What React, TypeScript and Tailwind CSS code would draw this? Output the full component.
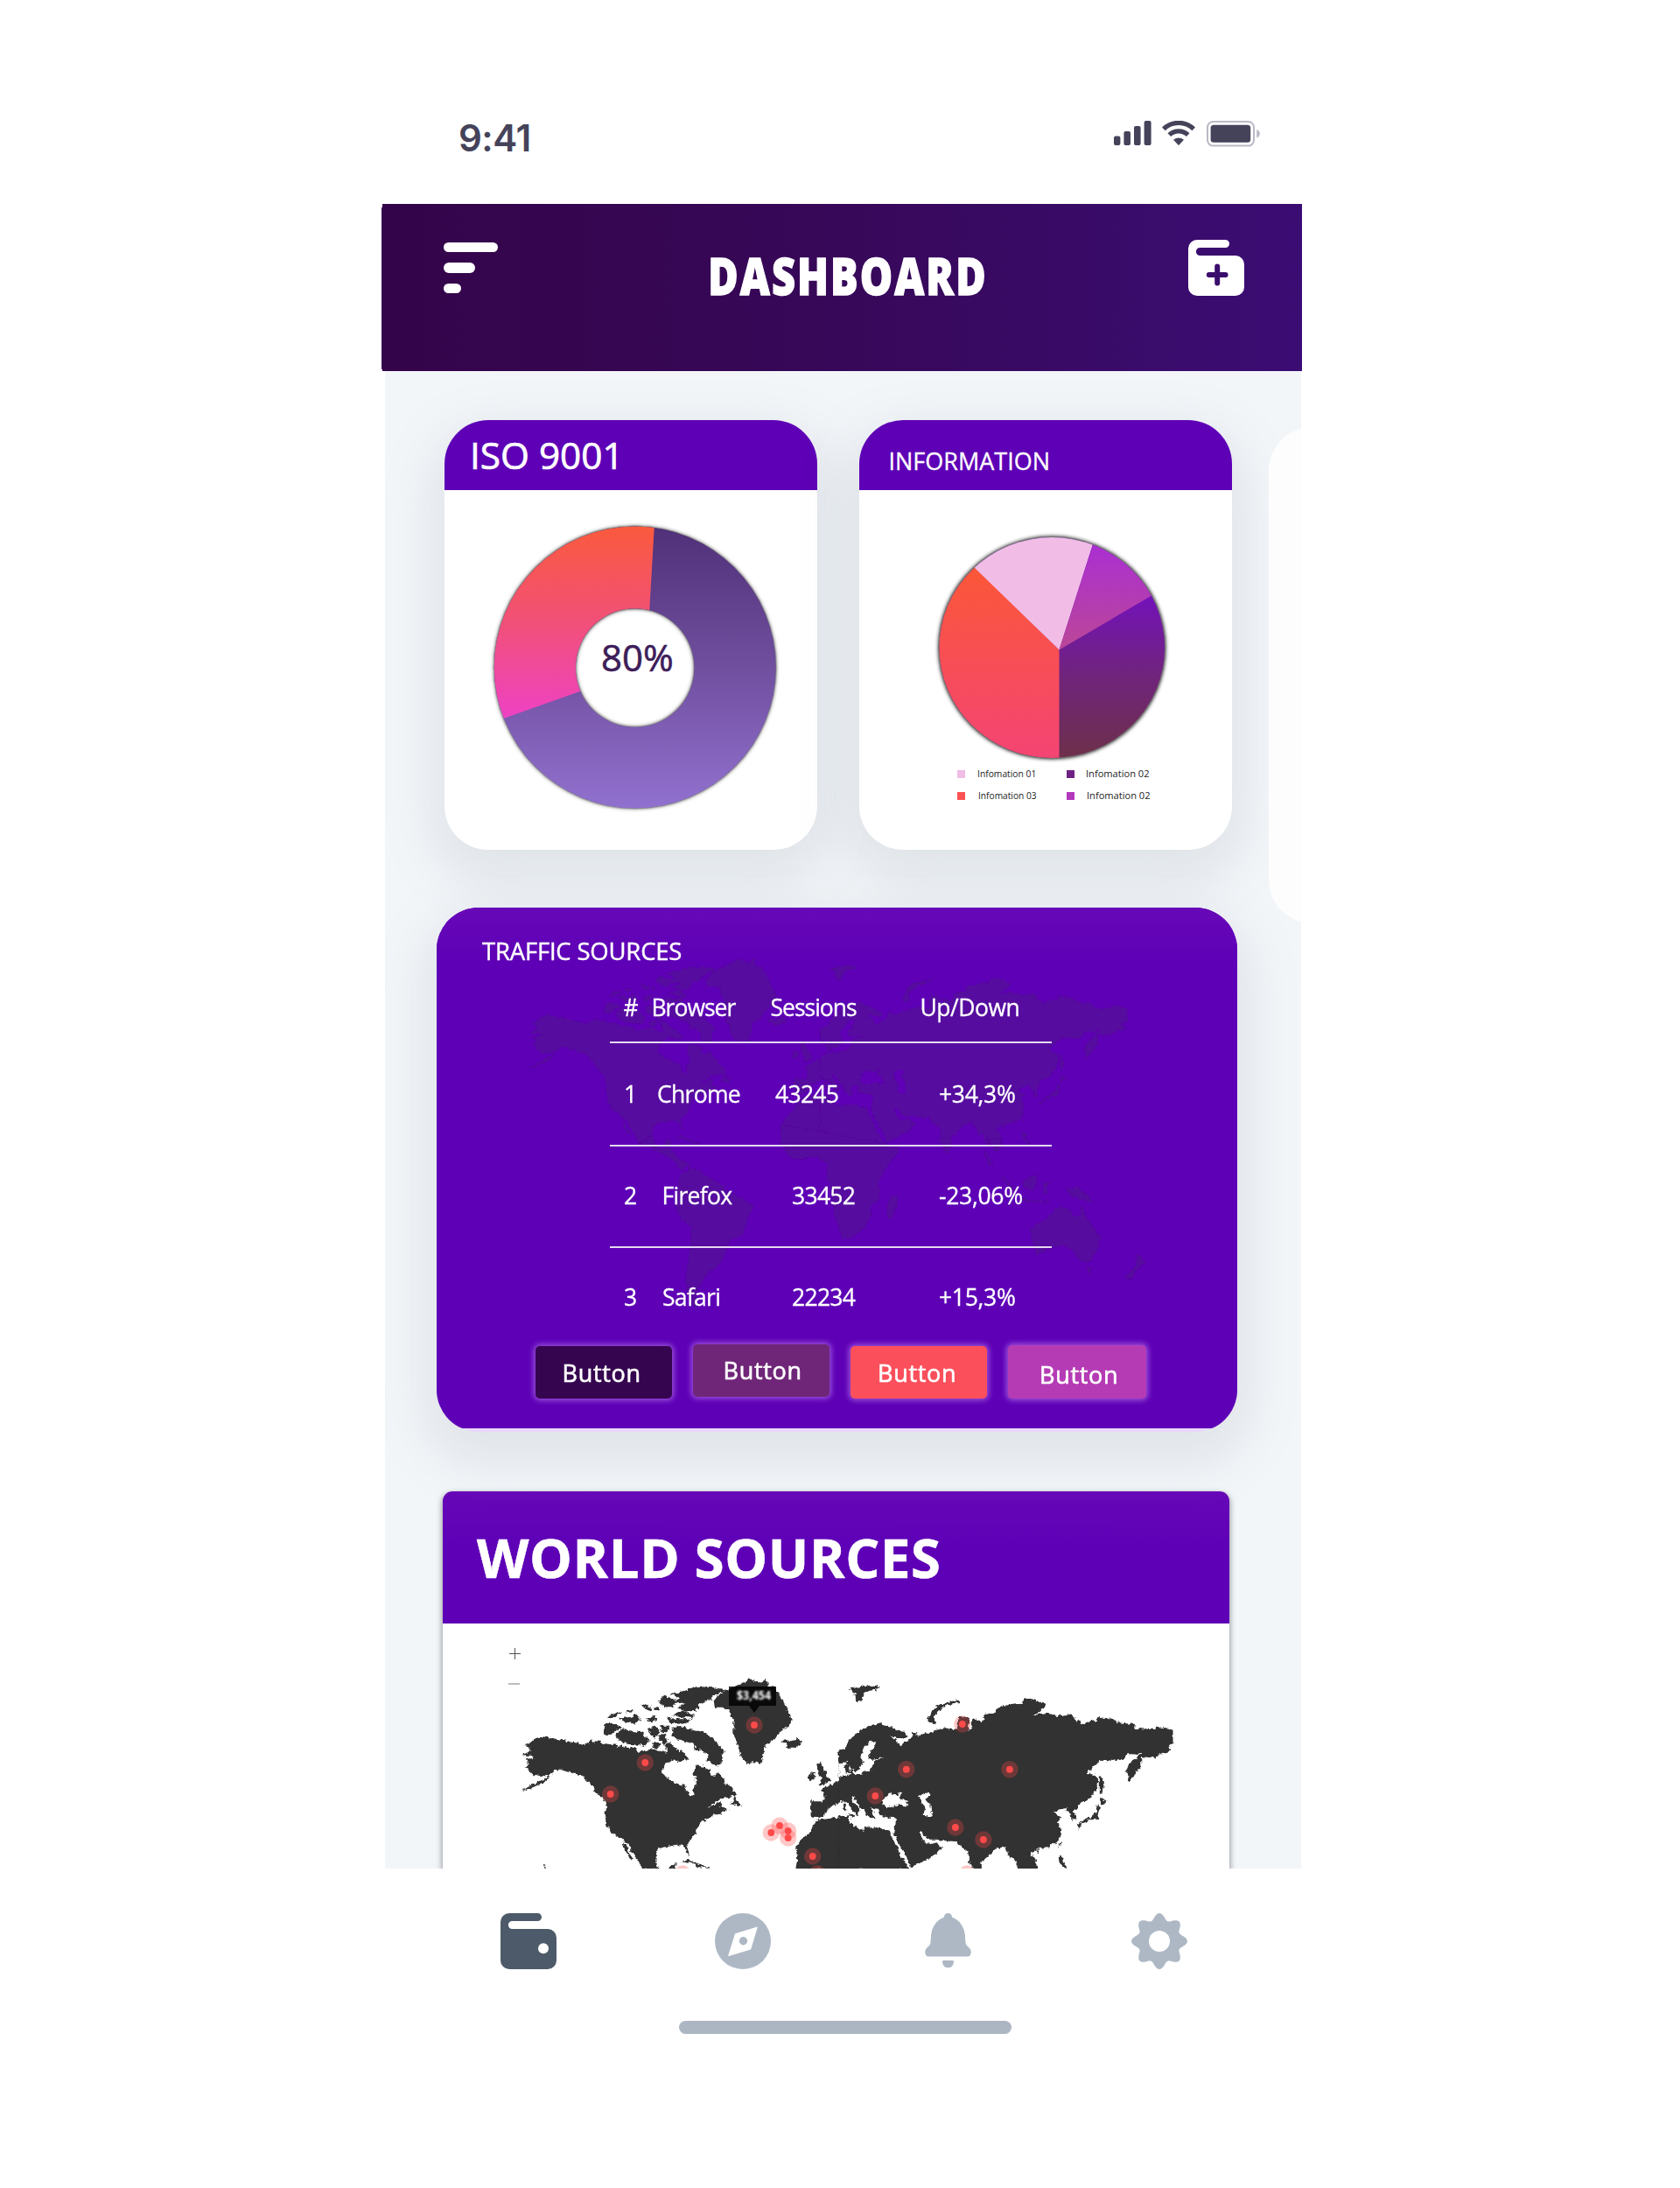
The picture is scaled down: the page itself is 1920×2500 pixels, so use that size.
import React from "react";

const SANS = "font-['Open_Sans','Noto_Sans',sans-serif]";

/* ---------- icons ---------- */

function SignalIcon() {
  return (
    <svg width="43" height="28" viewBox="0 0 43 28" fill="#45435a">
      <rect x="0" y="17.5" width="7.4" height="10.5" rx="2" />
      <rect x="11.4" y="12" width="7.6" height="16" rx="2" />
      <rect x="23" y="6" width="7.6" height="22" rx="2" />
      <rect x="34.6" y="0" width="8" height="28" rx="2" />
    </svg>
  );
}

function WifiIcon() {
  return (
    <svg width="38" height="28" viewBox="0 0 38 28" fill="none" stroke="#45435a" strokeWidth="5.2">
      <path d="M1.8 9.4A24.5 24.5 0 0 1 36.2 9.4" />
      <path d="M8.3 16.2A15.4 15.4 0 0 1 29.7 16.2" />
      <path d="M13 21.8Q19 17.4 25 21.8L19.6 27.6Q19 28.2 18.4 27.6Z" fill="#45435a" stroke="none" />
    </svg>
  );
}

function BatteryIcon() {
  return (
    <svg width="62" height="30" viewBox="0 0 62 30">
      <rect x="1" y="1" width="53" height="27.6" rx="6.5" fill="none" stroke="#bbb9c6" strokeWidth="2" />
      <rect x="4.6" y="4.8" width="45.6" height="20" rx="3.5" fill="#45435a" />
      <path d="M57.2 10Q60.8 11.5 60.8 14.8T57.2 19.6Z" fill="#bbb9c6" />
    </svg>
  );
}

const WALLET =
  "M10 0H42.5A4.5 4.5 0 0 1 42.5 9H13.4A4.5 4.5 0 0 0 13.4 18H54A10 10 0 0 1 64 28V54A10 10 0 0 1 54 64H10A10 10 0 0 1 0 54V10A10 10 0 0 1 10 0Z";

function AddWalletIcon() {
  return (
    <svg width="64" height="64" viewBox="0 0 64 64">
      <path d={WALLET} fill="#fff" />
      <path d="M33.2 30.6V49.4M23.8 40H42.6" stroke="#3a0d6c" strokeWidth="6" strokeLinecap="round" />
    </svg>
  );
}

function WalletIcon() {
  return (
    <svg width="64" height="64" viewBox="0 0 64 64">
      <path d={WALLET} fill="#4d5a69" />
      <circle cx="49" cy="40.3" r="6" fill="#fff" />
    </svg>
  );
}

function CompassIcon() {
  return (
    <svg width="64" height="64" viewBox="0 0 64 64">
      <circle cx="32" cy="32" r="32" fill="#aeb8c5" />
      <path
        d="M48 16.3L40.6 40.8L15.9 48.4L23.6 24Z"
        fill="#fff"
        stroke="#fff"
        strokeWidth="1.4"
        strokeLinejoin="round"
      />
      <circle cx="32.5" cy="31.8" r="4.7" fill="#aeb8c5" />
    </svg>
  );
}

function BellIcon() {
  return (
    <svg width="53" height="63" viewBox="0 0 53 63" fill="#aeb8c5">
      <path d="M26.5 0C29 0 31 1.8 31.3 4.8C40 8 45.4 16.5 46 26C46.2 30 46.3 33 47 35.5C48 37.5 50.5 38.8 51.8 41C53.3 44 52.8 46.5 51.5 48.3Q50.8 49.5 49.5 49.5H3.5Q2.2 49.5 1.5 48.3C.2 46.5 -.3 44 1.2 41C2.5 38.8 5 37.5 6 35.5C6.7 33 6.8 30 7 26C7.6 16.5 13 8 21.7 4.8C22 1.8 24 0 26.5 0Z" />
      <path d="M21 54H32Q33 54 33 55.8A6.5 6.5 0 0 1 20 55.8Q20 54 21 54Z" />
    </svg>
  );
}

const GEAR =
  "M" +
  Array.from({ length: 144 }, (_, i) => {
    const t = (i * Math.PI) / 72;
    const r = 28.2 + 3.7 * Math.cos(8 * t);
    return `${(32 + r * Math.sin(t)).toFixed(2)} ${(32 - r * Math.cos(t)).toFixed(2)}`;
  }).join("L") +
  "Z";

function GearIcon() {
  return (
    <svg width="64" height="64" viewBox="0 0 64 64">
      <path d={GEAR} fill="#aeb8c5" />
      <circle cx="32" cy="32" r="12" fill="#fff" />
    </svg>
  );
}

/* ---------- world map ---------- */

const WEST_LAND = [
  "M330 942L352 930L365 918L392 912L402 916L440 921L470 926L500 934L530 942L556 930L568 928L590 930L615 938L650 942L680 950L712 955L715 965L745 962L768 955L790 962L815 968L838 970L850 985L832 995L812 1006L801 1030L803 1045L830 1062L855 1075L883 1082L885 1100L900 1118L907 1112L906 1090L918 1075L916 1055L908 1040L914 1012L940 1015L962 1025L966 1045L978 1050L992 1035L1008 1055L1025 1080L1050 1098L1056 1115L1030 1122L1000 1126L975 1140L958 1155L985 1142L1005 1135L1000 1155L1020 1162L1028 1158L1000 1178L985 1180L960 1195L935 1205L920 1225L918 1245L905 1258L888 1275L886 1290L896 1310L893 1320L884 1308L875 1288L850 1283L820 1290L795 1292L782 1305L778 1335L788 1370L735 1370L700 1310L680 1278L665 1270L650 1255L628 1245L610 1215L604 1180L607 1145L598 1125L575 1105L560 1080L540 1060L520 1045L480 1035L450 1025L432 1030L415 1045L400 1048L360 1045L345 1030L332 1015L345 1005L332 992L362 985L352 978L320 975L335 965L355 962L345 955Z",
  "M665 1272L678 1290L702 1336L690 1328L670 1298Z",
  "M315 1100L345 1083L380 1066L415 1046L412 1056L385 1074L350 1090Z",
  "M1036 1144L1050 1118L1062 1135L1075 1152L1060 1150Z",
  "M640 905L660 888L690 892L730 898L757 925L740 945L710 940L680 938L650 925Z",
  "M597 905L605 870L640 870L664 882L640 892L625 906Z",
  "M612 848L632 832L660 826L652 838L625 850Z",
  "M650 850L672 844L690 850L710 834L728 858L700 868L672 862Z",
  "M678 822L700 820L700 829L680 830Z",
  "M730 800L750 808L770 816L762 826L742 818Z",
  "M775 810L794 816L790 825L776 820Z",
  "M748 848L775 842L782 852L765 865L750 860Z",
  "M750 885L775 878L792 895L782 915L760 907Z",
  "M790 878L822 874L826 888L802 902Z",
  "M786 908L812 903L818 932L800 936Z",
  "M765 932L794 933L788 957L770 948Z",
  "M833 882L862 876L888 883L892 915L860 924L836 912Z",
  "M825 766L880 755L920 743L980 745L1020 752L985 768L960 790L930 800L915 824L880 827L850 812L880 803L840 795L862 780Z",
  "M788 792L808 773L850 790L838 816L808 810Z",
  "M835 838L870 824L912 842L905 850L860 842Z",
  "M815 848L860 853L897 852L890 868L830 870Z",
  "M860 905L890 886L930 898L965 908L987 935L1018 965L1002 975L1005 1000L990 1014L955 997L960 975L930 957L905 937L870 927Z",
  "M805 938L830 933L850 958L870 963L892 990L860 1000L840 986L820 966Z",
  "M912 948L930 948L930 960L914 960Z",
  "M978 790L1000 765L1040 745L1075 730L1100 713L1130 728L1160 716L1165 740L1190 745L1220 800L1245 850L1235 875L1200 900L1185 925L1155 940L1145 985L1142 1008L1115 1000L1090 1002L1070 980L1060 945L1045 900L1045 860L1030 820L1005 812L980 812Z",
  "M1208 928L1222 922L1240 928L1265 917L1280 935L1255 950L1235 950L1222 938Z",
  "M1330 1008L1345 1002L1352 1020L1365 1045L1378 1065L1355 1077L1333 1078L1348 1060L1335 1040Z",
  "M1302 1048L1318 1034L1328 1045L1320 1062L1302 1065Z",
  "M1440 942L1420 955L1402 970L1405 1000L1425 1005L1440 995Z",
  "M1420 1015L1440 1008V1040L1428 1035Z",
  "M1440 1042L1420 1055L1395 1068L1375 1080L1340 1095L1355 1102L1358 1125L1350 1135L1308 1135L1310 1185L1335 1190L1355 1185L1368 1160L1385 1150L1410 1138L1440 1130Z",
  "M1422 1142L1430 1142L1432 1168L1423 1166Z",
  "M1440 1186L1400 1190L1370 1195L1335 1198L1320 1215L1305 1245L1280 1265L1262 1290L1258 1310L1262 1340L1258 1370H1440Z",
  "M865 1342L885 1335L920 1346L968 1366L930 1360L900 1347Z",
  "M820 1370L830 1350L848 1348L846 1370Z",
  "M392 1352L402 1356L400 1364Z",
].join("");

const EAST_LAND = [
  "M-4 962L20 945L40 915L70 890L105 872L140 868L165 878L215 900L222 915L205 922L180 915L168 908L185 925L200 945L215 930L240 920L238 900L250 898L256 912L285 900L345 883L375 888L392 885L385 870L395 843L425 845L430 860L425 895L435 885L440 850L470 865L478 838L515 828L530 810L575 800L605 797L612 782L635 783L680 800L682 808L660 828L640 840L680 832L735 842L770 835L780 855L800 868L850 858L855 846L905 852L920 865L975 870L985 885L1040 888L1050 878L1100 886L1105 892V935L1090 940L1100 960L1070 970L1045 983L1010 983L998 980L1000 1000L995 1020L975 1045L960 1068L950 1035L955 1010L985 985L1008 962L985 974L955 972L940 992L905 995L865 992L845 1010L820 1038L850 1045L858 1065L850 1095L825 1130L795 1140L785 1165L775 1165L783 1195L768 1200L765 1175L750 1165L755 1158L735 1160L712 1170L722 1185L738 1190L722 1205L735 1230L733 1250L720 1275L690 1290L655 1298L635 1310L650 1335L655 1370H595L580 1330L565 1330L555 1305L542 1292L515 1298L495 1320L470 1340L470 1370L442 1370L430 1340L425 1305L408 1295L385 1272L350 1270L320 1265L290 1265L268 1235L265 1245L275 1265L290 1280L315 1275L340 1292L320 1315L290 1335L235 1360L225 1332L205 1298L187 1262L178 1240L188 1192L165 1190L135 1185L128 1160L105 1158L110 1175L118 1190L100 1192L85 1180L78 1160L60 1145L45 1120L38 1125L50 1145L68 1162L55 1180L35 1158L20 1138L-4 1130Z",
  "M-4 1186L22 1190L30 1210L75 1232L90 1222L130 1227L165 1238L185 1285L210 1335L232 1370H-4Z",
  "M22 1178L50 1182L46 1192L28 1186Z",
  "M290 855L300 840L310 815L335 800L395 786L398 795L350 808L325 825L312 845L320 868L300 864Z",
  "M28 748L55 745L80 738L130 742L120 752L88 757L78 775L65 792L45 772L55 765Z",
  "M862 1048L868 1050L876 1085L868 1108L862 1110Z",
  "M860 1118L872 1128L886 1133L866 1148Z",
  "M853 1146L862 1165L856 1195L835 1198L800 1212L795 1205L830 1190L850 1170Z",
  "M786 1212L802 1215L792 1229Z",
  "M724 1284L735 1272L732 1290Z",
  "M725 1322L737 1320L740 1345L758 1366L745 1362L728 1345Z",
  "M648 1302L666 1299L658 1316Z",
].join("");

const EAST_SEA = [
  "M105 925L119 934L112 950L96 968L98 990L148 985L112 996L108 1018L92 1034L50 1044L38 1030L60 1028L78 1000L68 985L75 960Z",
  "M-4 1008L22 996L36 1026L38 1040L0 1052L-4 1052Z",
  "M140 1142L148 1118L165 1105L180 1114L208 1102L196 1120L222 1136L224 1150L185 1148L155 1156Z",
  "M260 1118L280 1106L298 1106L296 1120L285 1128L300 1145L304 1182L290 1189L275 1180L280 1155Z",
].join("");

const DENMARK = "M14 1012L28 1004L30 1022L38 1034L20 1040Z";

const SOUTH_LAND = [
  "M731 1306L755 1318L768 1325L777 1335L785 1339L790 1331L775 1322L765 1310L753 1312L745 1297Z",
  "M783 1333L797 1336L815 1348L823 1352L832 1361L850 1370L862 1378L855 1392L850 1410L835 1418L827 1437L817 1450L807 1457L797 1475L796 1497L787 1484L783 1463L788 1430L790 1403L778 1393L771 1377L776 1347Z",
  "M892 1285L893 1308L898 1317L907 1325L920 1323L933 1322L945 1330L944 1342L950 1360L953 1387L962 1415L974 1415L989 1402L996 1388L995 1380L1006 1368L1004 1350L1013 1334L1027 1317L1028 1311L1012 1306Z",
  "M1025 1364L1016 1370L1013 1382L1014 1393L1020 1392L1026 1375Z",
  "M1177 1403L1194 1393L1206 1382L1213 1378L1223 1382L1225 1388L1234 1390L1236 1376L1242 1390L1258 1415L1254 1428L1246 1442L1234 1441L1227 1430L1215 1423L1198 1427L1184 1435L1180 1420Z",
  "M1241 1447L1248 1450L1244 1456Z",
  "M1299 1432L1309 1441L1300 1450L1293 1463L1285 1460L1298 1446Z",
  "M1123 1312L1129 1318L1135 1334L1130 1330Z",
  "M1140 1338L1152 1350L1162 1362L1154 1358Z",
  "M1168 1350L1184 1341L1185 1352L1180 1361L1171 1357Z",
  "M1192 1352L1204 1350L1196 1356L1198 1366L1192 1364Z",
  "M1218 1359L1232 1356L1243 1365L1251 1375L1235 1371L1223 1367Z",
  "M1165 1369L1200 1373L1200 1375L1165 1372Z",
  "M1073 1300L1078 1313L1083 1320L1089 1302Z",
  "M1127 1302L1137 1316L1143 1313L1145 1300Z",
].join("");

function NorthernLand({ land, sea }: { land: string; sea: string }) {
  return (
    <>
      <path transform="translate(490 1680) scale(.33333)" d={WEST_LAND} fill={land} />
      <g transform="translate(960 1680) scale(.34436 .33333)">
        <path d={EAST_LAND} fill={land} />
        <path d={EAST_SEA} fill={sea} />
        <path d={DENMARK} fill={land} />
      </g>
    </>
  );
}

function CoastFilter({ id, amount }: { id: string; amount: number }) {
  return (
    <filter id={id} x="-5%" y="-5%" width="110%" height="110%">
      <feTurbulence type="fractalNoise" baseFrequency="0.22" numOctaves="3" seed="4" result="n" />
      <feDisplacementMap in="SourceGraphic" in2="n" scale={amount} xChannelSelector="R" yChannelSelector="G" />
    </filter>
  );
}

const PINS = [
  [737.3, 2014], [697.7, 2050], [862, 1971], [891, 2086], [881.3, 2094], [900.7, 2092], [900.7, 2100],
  [928.7, 2121], [934, 2141], [780, 2141], [1035.8, 2021.7], [1153.9, 2021.7], [1000.3, 2052],
  [1099.8, 1970], [1091.9, 2088], [1123.9, 2102], [1105.3, 2141],
];

function WorldMap() {
  return (
    <svg className="block" width="899" height="280" viewBox="506 1855 899 280">
      <CoastFilter id="coast" amount={6} />
      <path d="M588.5 1883V1896M582 1889.5H595" stroke="#555" strokeWidth="1" />
      <path d="M581 1924H594" stroke="#bdbdbd" strokeWidth="2" />
      <g filter="url(#coast)">
        <NorthernLand land="#303030" sea="#fff" />
      </g>
      {PINS.map(([x, y]) => (
        <g key={`${x}-${y}`} fill="#ff4a4a">
          <circle cx={x} cy={y} r="9.7" opacity=".3" />
          <circle cx={x} cy={y} r="3.9" />
        </g>
      ))}
      <path d="M833 1927H887V1949H868L862 1957L856 1949H833Z" fill="#000" fillOpacity=".82" />
      <text
        x="842"
        y="1942"
        fontSize="14"
        fontWeight="700"
        fill="#fff"
        textLength="39"
        lengthAdjust="spacingAndGlyphs"
        className="font-['Open_Sans',sans-serif] blur-[1.3px]"
      >
        $3,454
      </text>
    </svg>
  );
}

function BackdropMap() {
  return (
    <svg className="absolute inset-0" width="915" height="595" viewBox="499 1037 915 595">
      <CoastFilter id="coastSoft" amount={5} />
      <g filter="url(#coastSoft)">
        <g transform="translate(605 1095) scale(.9187 .98) translate(-596.7 -1918)">
          <NorthernLand land="#57079f" sea="#5e00b6" />
        </g>
        <path d={SOUTH_LAND} fill="#57079f" />
      </g>
    </svg>
  );
}

/* ---------- charts ---------- */

function Donut() {
  return (
    <svg className="block" width="426" height="411" viewBox="508 560 426 411">
      <defs>
        <clipPath id="ring">
          <path
            clipRule="evenodd"
            d="M725.8 601.5a161 161 0 1 1 0 322a161 161 0 1 1 0 -322ZM725.6 695.2a67.8 67.8 0 1 0 0 135.6a67.8 67.8 0 1 0 0 -135.6Z"
          />
        </clipPath>
        <linearGradient id="violet" gradientUnits="userSpaceOnUse" x1="0" y1="601" x2="0" y2="924">
          <stop offset="0" stopColor="#503078" />
          <stop offset=".5" stopColor="#704f9f" />
          <stop offset="1" stopColor="#9171cf" />
        </linearGradient>
        <linearGradient id="sunset" gradientUnits="userSpaceOnUse" x1="0" y1="601" x2="0" y2="821">
          <stop offset="0" stopColor="#fa5a3d" />
          <stop offset=".5" stopColor="#f15078" />
          <stop offset="1" stopColor="#ee42c4" />
        </linearGradient>
      </defs>
      <g className="[filter:drop-shadow(0_0_1px_rgba(0,0,0,.5))_drop-shadow(0_0_2px_rgba(0,0,0,.6))]">
        <g clipPath="url(#ring)">
          <rect x="560" y="596" width="332" height="332" fill="url(#violet)" />
          <path d="M548.8 830.5L661.3 790.6L738 770.9L742.3 696.6L748.4 591H548.8Z" fill="url(#sunset)" />
        </g>
      </g>
      <text
        x="687"
        y="766.7"
        fontSize="42"
        fill="#3d1d59"
        stroke="#3d1d59"
        strokeWidth=".6"
        className="font-['Open_Sans',sans-serif]"
      >
        80%
      </text>
    </svg>
  );
}

function Pie() {
  return (
    <svg className="block" width="426" height="316" viewBox="982 560 426 316">
      <defs>
        <clipPath id="disc">
          <ellipse cx="1202.3" cy="740" rx="128.8" ry="126" />
        </clipPath>
        <linearGradient id="coral" gradientUnits="userSpaceOnUse" x1="0" y1="650" x2="0" y2="866">
          <stop offset="0" stopColor="#fb5738" />
          <stop offset="1" stopColor="#f44474" />
        </linearGradient>
        <linearGradient id="plum" gradientUnits="userSpaceOnUse" x1="0" y1="681" x2="0" y2="866">
          <stop offset="0" stopColor="#7312b9" />
          <stop offset=".5" stopColor="#70247b" />
          <stop offset="1" stopColor="#6d304a" />
        </linearGradient>
        <linearGradient id="orchid" gradientUnits="userSpaceOnUse" x1="0" y1="622" x2="0" y2="742">
          <stop offset="0" stopColor="#aa2fd2" />
          <stop offset="1" stopColor="#bb4797" />
        </linearGradient>
      </defs>
      <ellipse
        cx="1202.3"
        cy="740"
        rx="129.9"
        ry="127.2"
        fill="#777"
        className="[filter:drop-shadow(0_0_2px_rgba(0,0,0,.9))]"
      />
      <g clipPath="url(#disc)">
        <rect x="1060" y="600" width="290" height="280" fill="url(#plum)" />
        <path d="M1210.5 742.4V880H1060V596.6L1115.4 648.7Z" fill="url(#coral)" />
        <path d="M1210.5 742.4L1060 596.6V590H1259.5L1248.9 621.9Z" fill="#f1bce6" />
        <path d="M1210.5 742.4L1259.5 590H1360V654.8L1315.7 680.8Z" fill="url(#orchid)" />
      </g>
    </svg>
  );
}

/* ---------- page sections ---------- */

function StatusBar() {
  return (
    <div className="flex h-[233px] w-[1052px] items-start justify-between pl-[88px] pr-[47px]">
      <span className="mt-[137px] font-['Inter',sans-serif] text-[42px] font-semibold leading-none tracking-[-0.5px] text-[#45435a]">
        9:41
      </span>
      <div className="mt-[138px] flex items-start">
        <SignalIcon />
        <div className="ml-[12px]">
          <WifiIcon />
        </div>
        <div className="ml-[13px]">
          <BatteryIcon />
        </div>
      </div>
    </div>
  );
}

function Header() {
  return (
    <header className="flex">
      <div className="mb-[2px] mt-[4px] w-px bg-[#3a0b63]" />
      <div className="flex h-[191px] w-[1051px] items-start justify-between bg-linear-to-r from-[#34044a] via-[#370859] to-[#3b0d74] pl-[70px] pr-[66px]">
        <div className="mt-[43.5px] flex flex-col gap-[12px]">
          <div className="h-[11.5px] w-[62px] rounded-full bg-white" />
          <div className="h-[11.5px] w-[36px] rounded-full bg-white" />
          <div className="h-[11.5px] w-[20px] rounded-full bg-white" />
        </div>
        <h1
          className={`${SANS} ml-[11px] mt-[52.5px] w-[410px] scale-x-[.81] whitespace-nowrap text-center text-[58px] font-extrabold leading-none tracking-[2.5px] text-white [-webkit-text-stroke:1.4px_white]`}
        >
          DASHBOARD
        </h1>
        <div className="mt-[41px]">
          <AddWalletIcon />
        </div>
      </div>
    </header>
  );
}

const LEGEND = [
  { label: "Infomation 01", dot: "bg-[#f1bce6]", text: "ml-[14px] text-[10.3px]" },
  { label: "Infomation 02", dot: "bg-[#6f2283]", text: "ml-[13px] text-[11.1px]" },
  { label: "Infomation 03", dot: "bg-[#fb5252]", text: "ml-[15px] text-[10.2px]" },
  { label: "Infomation 02", dot: "bg-[#b239bb]", text: "ml-[14px] text-[11.1px]" },
];

const CARD_SHADOW = "shadow-[0_22px_60px_14px_rgba(95,105,125,0.13)]";

function SummaryCards() {
  return (
    <div className="flex h-[491px] shrink-0 pl-[68px]">
      <section className={`h-[491px] w-[426px] shrink-0 overflow-hidden rounded-[50px] bg-white ${CARD_SHADOW}`}>
        <div className="h-[80px] bg-[#5e00b6] pl-[29px] pt-[18.5px]">
          <h2 className={`${SANS} text-[42.3px] leading-none text-white [-webkit-text-stroke:0.7px_white]`}>
            ISO 9001
          </h2>
        </div>
        <Donut />
      </section>
      <section className={`ml-[48px] h-[491px] w-[426px] shrink-0 overflow-hidden rounded-[50px] bg-white ${CARD_SHADOW}`}>
        <div className="h-[80px] bg-[#5e00b6] pl-[33.5px] pt-[33px]">
          <h2 className={`${SANS} text-[27px] leading-none text-white [-webkit-text-stroke:0.3px_white]`}>
            INFORMATION
          </h2>
        </div>
        <Pie />
        <div className="ml-[112px] grid w-[240px] grid-cols-[125px_115px] gap-y-[9px]">
          {LEGEND.map((item, i) => (
            <div key={i} className="flex h-[16px] items-center">
              <span className={`h-[9px] w-[9px] ${item.dot}`} />
              <span className={`${SANS} whitespace-nowrap leading-none text-[#222] ${item.text}`}>{item.label}</span>
            </div>
          ))}
        </div>
      </section>
      <div className="ml-[42px] mt-[8px] h-[567px] w-[200px] shrink-0 rounded-[50px] bg-[#fdfdfe]" />
    </div>
  );
}

const ROWS = [
  {
    row: "h-[118px] border-b-2 pt-[44.5px]",
    n: "1",
    name: "Chrome",
    nameCls: "pl-[38px]",
    sessions: "43245",
    sesCls: "pl-[1px]",
    upDown: "+34,3%",
  },
  {
    row: "h-[116px] border-b-2 pt-[42.5px]",
    n: "2",
    name: "Firefox",
    nameCls: "pl-[43.5px]",
    sessions: "33452",
    sesCls: "pl-[20px]",
    upDown: "-23,06%",
  },
  {
    row: "h-[110px] pt-[42.5px]",
    n: "3",
    name: "Safari",
    nameCls: "pl-[44px]",
    sessions: "22234",
    sesCls: "pl-[20px]",
    upDown: "+15,3%",
  },
];

const BUTTONS = [
  "mt-[2px] h-[60px] w-[156px] bg-[#350550] pl-[30.5px] pt-[17px]",
  "ml-[24px] h-[60px] w-[156px] bg-[#6f2678] pl-[34.5px] pt-[15.5px]",
  "ml-[24px] mt-[2px] h-[60px] w-[156px] bg-[#fb4f5b] pl-[31px] pt-[17px]",
  "ml-[24px] mt-[1px] h-[61px] w-[158px] bg-[#b53bb5] pl-[36px] pt-[19.5px]",
];

function TrafficCard() {
  return (
    <section
      className={`relative ml-[59px] mt-[66px] h-[599px] w-[915px] shrink-0 overflow-hidden rounded-[48px] bg-[#ead6fc] ${CARD_SHADOW}`}
    >
      <div className={`relative h-[595px] bg-[#5e00b6] text-white ${SANS}`}>
        <div className="absolute inset-x-0 top-0 h-[60px] bg-linear-to-b from-[#6708b8] to-[#5e00b6]" />
        <BackdropMap />
        <div className="relative">
          <h2 className="pl-[52px] pt-[35.5px] text-[27.5px] leading-none tracking-[-0.2px] [-webkit-text-stroke:0.4px_white]">
            TRAFFIC SOURCES
          </h2>
          <div className="ml-[198px] w-[505px] text-[26.5px] leading-none tracking-[-0.7px] [-webkit-text-stroke:0.3px_white]">
            <div className="mt-[37.5px] flex h-[54.5px] items-start border-b-2 border-[#e6d9f0] pl-[15.5px]">
              <span className="w-[32px] whitespace-nowrap">#</span>
              <span className="w-[136px] whitespace-nowrap tracking-[-1px]">Browser</span>
              <span className="w-[171px] whitespace-nowrap tracking-[-1px]">Sessions</span>
              <span className="whitespace-nowrap tracking-[-0.5px]">Up/Down</span>
            </div>
            {ROWS.map((row) => (
              <div key={row.n} className={`flex items-start border-[#e6d9f0] pl-[16px] ${row.row}`}>
                <span className="w-0 whitespace-nowrap">{row.n}</span>
                <span className={`w-[172px] whitespace-nowrap ${row.nameCls}`}>{row.name}</span>
                <span className={`w-[188px] whitespace-nowrap ${row.sesCls}`}>{row.sessions}</span>
                <span className="whitespace-nowrap tracking-[-0.3px]">{row.upDown}</span>
              </div>
            ))}
          </div>
          <div className="ml-[113px] flex items-start">
            {BUTTONS.map((cls) => (
              <button
                key={cls}
                className={`flex shrink-0 items-start whitespace-nowrap rounded-[5px] text-[27px] font-medium leading-none tracking-[0.7px] shadow-[0_0_6px_2px_rgba(190,130,240,0.65)] [-webkit-text-stroke:0.6px_white] ${cls}`}
              >
                Button
              </button>
            ))}
          </div>
        </div>
      </div>
    </section>
  );
}

function WorldCard() {
  return (
    <section className="ml-[66px] mt-[68px] h-[431px] w-[899px] shrink-0 overflow-hidden rounded-t-[11px] bg-white shadow-[0_3px_6px_1px_rgba(60,60,70,0.5)]">
      <div className="h-[151px] bg-linear-to-b from-[#6708b8] via-[#5e00b6] via-40% to-[#5e00b6] pl-[39px] pt-[44.5px]">
        <h2
          className={`${SANS} whitespace-nowrap text-[61.5px] font-bold leading-none tracking-[0.6px] text-white [-webkit-text-stroke:0.6px_white]`}
        >
          WORLD SOURCES
        </h2>
      </div>
      <WorldMap />
    </section>
  );
}

function TabBar() {
  return (
    <nav>
      <div className="flex h-[64px] items-center pl-[136px]">
        <WalletIcon />
        <div className="ml-[181px]">
          <CompassIcon />
        </div>
        <div className="ml-[176px]">
          <BellIcon />
        </div>
        <div className="ml-[183px]">
          <GearIcon />
        </div>
      </div>
      <div className="ml-[340px] mt-[59.5px] h-[15px] w-[380px] rounded-full bg-[#acb6c3]" />
    </nav>
  );
}

export default function App() {
  return (
    <div className="h-[2500px] w-[1920px] overflow-hidden bg-white pl-[436px]">
      <StatusBar />
      <Header />
      <main className="ml-[4px] flex h-[1711px] w-[1047px] flex-col overflow-hidden bg-[#f3f6f9] pt-[56px]">
        <SummaryCards />
        <TrafficCard />
        <WorldCard />
      </main>
      <div className="pt-[50.5px]">
        <TabBar />
      </div>
    </div>
  );
}
